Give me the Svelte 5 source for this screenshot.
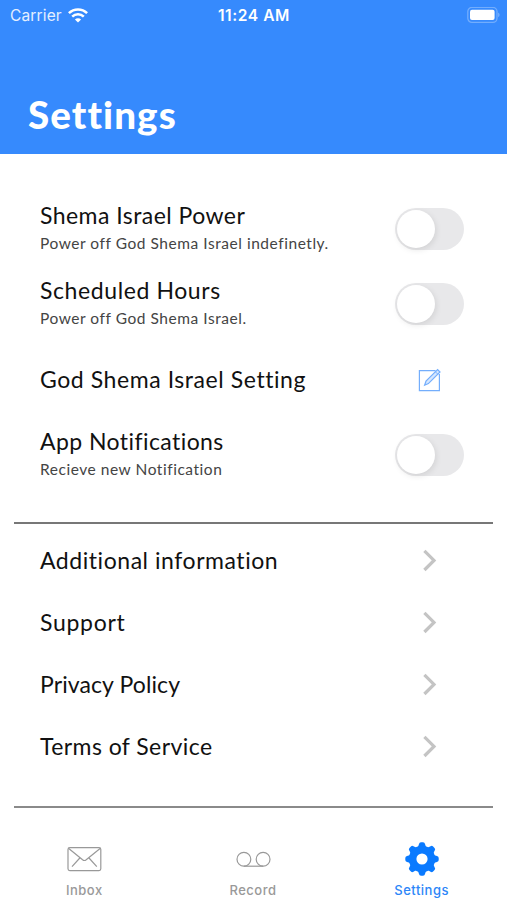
<script>
  // spacing is the letter spacing in px, tuned per label
  const settings = [
    {
      title: "Shema Israel Power",
      spacing: 0.45,
      sub: "Power off God Shema Israel indefinetly.",
      kind: "switch",
    },
    { title: "Scheduled Hours", spacing: 0.6, sub: "Power off God Shema Israel.", kind: "switch" },
    { title: "God Shema Israel Setting", spacing: 0.57, kind: "edit" },
    { title: "App Notifications", spacing: 0.43, sub: "Recieve new Notification", kind: "switch" },
  ];
  const links = [
    { title: "Additional information", spacing: 0.55 },
    { title: "Support", spacing: 0.7 },
    { title: "Privacy Policy", spacing: 0.1 },
    { title: "Terms of Service", spacing: 0.43 },
  ];
  const teeth = [0, 45, 90, 135, 180, 225, 270, 315];

  let on = $state([false, false, false, false]);
</script>

<div class="screen">
  <header>
    <div class="status">
      <div class="carrier">
        <span>Carrier</span>
        <svg width="20" height="15" viewBox="0 0 20 15" fill="none" stroke="#fff" stroke-width="2.5">
          <path d="M0.9 5.2a13 13 0 0 1 18.2 0" />
          <path d="M4.2 8.7a8.3 8.3 0 0 1 11.6 0" />
          <path d="M10 14.6 6.9 11.5a4.4 4.4 0 0 1 6.2 0z" fill="#fff" stroke="none" />
        </svg>
      </div>
      <span class="time">11:24 AM</span>
      <svg class="battery" width="33" height="17" viewBox="0 0 33 17">
        <rect x="0.8" y="0.4" width="29.2" height="15" rx="4.2" fill="none" stroke="#fff" stroke-opacity="0.3" stroke-width="1.3" />
        <rect x="3" y="2.7" width="24.6" height="10.4" rx="2" fill="#fff" />
        <path d="M31.3 5.6v4.6c1.6-.8 1.6-3.8 0-4.6z" fill="#fff" fill-opacity="0.4" />
      </svg>
    </div>
    <h1>Settings</h1>
  </header>

  <main>
    <section class="settings">
      {#each settings as item, i}
        <div class="row">
          <div class="text">
            <div class="title" style="letter-spacing: {item.spacing}px">{item.title}</div>
            {#if item.sub}
              <div class="sub">{item.sub}</div>
            {/if}
          </div>
          <div class="control">
            {#if item.kind === "switch"}
              <button class="switch" class:on={on[i]} aria-label={item.title} onclick={() => (on[i] = !on[i])}>
                <span class="knob"></span>
              </button>
            {:else}
              <svg width="24" height="24" viewBox="0 0 24 24" fill="none" stroke="#74aefc" stroke-width="1.2">
                <path d="M18.6 2.6H2.4v20h20V6" />
                <path d="M7.6 17.2l1.4-4L20.6 1.6l2.4 2.4L11.4 15.6z" fill="#d5e7ff" />
                <path d="M18.4 3.8l2.5 2.5" stroke-width="0.9" />
              </svg>
            {/if}
          </div>
        </div>
      {/each}
    </section>

    <section class="links">
      {#each links as link}
        <div class="row link">
          <div class="title" style="letter-spacing: {link.spacing}px">{link.title}</div>
          <div class="control">
            <svg width="16" height="24" viewBox="0 0 16 24" fill="none" stroke="#c4c4c4" stroke-width="3.2">
              <path d="M3.4 2.8 13 12.4 3.4 22" />
            </svg>
          </div>
        </div>
      {/each}
    </section>
  </main>

  <nav>
    <div class="tab">
      <svg width="36" height="36" viewBox="0 0 36 36" fill="none" stroke="#999" stroke-width="1.2">
        <rect x="2" y="6.6" width="32.8" height="23" rx="1.8" />
        <path d="M2.4 7.2l14.2 11.6q1.8 1.4 3.6 0L34.4 7.2M6 25.6l7.8-8.6M30.8 25.6l-7.8-8.6" />
      </svg>
      <span>Inbox</span>
    </div>
    <div class="tab">
      <svg width="36" height="36" viewBox="0 0 36 36" fill="none" stroke="#999" stroke-width="1.2">
        <circle cx="8.9" cy="18.3" r="6.9" />
        <circle cx="28.1" cy="18.3" r="6.9" />
        <path d="M8.9 25.2h19.2" />
      </svg>
      <span>Record</span>
    </div>
    <div class="tab active">
      <svg width="36" height="36" viewBox="0 0 36 36">
        {#each teeth as angle}
          <path d="M12.4 7.5Q14.6 5.8 15 3 15.3 1.3 17 1.3h2Q20.7 1.3 21 3 21.4 5.8 23.6 7.5L18 12z" fill="#0a7aff" transform="rotate({angle} 18 18)" />
        {/each}
        <circle cx="18" cy="18" r="9.4" fill="none" stroke="#0a7aff" stroke-width="7.6" />
      </svg>
      <span>Settings</span>
    </div>
  </nav>
</div>

<style>
  :global(body) {
    margin: 0;
    background: #fff;
  }
  .screen {
    width: 507px;
    height: 900px;
    display: flex;
    flex-direction: column;
    overflow: hidden;
    background: #fff;
    color: #111;
    font-family: Lato, "Open Sans", sans-serif;
  }
  header {
    height: 154px;
    flex: none;
    display: flex;
    flex-direction: column;
    justify-content: space-between;
    background: #368afd;
    color: #fff;
  }
  .status {
    height: 30px;
    box-sizing: border-box;
    padding: 0 7px 0 10px;
    display: grid;
    grid-template-columns: 1fr auto 1fr;
    align-items: center;
    font-family: Inter, sans-serif;
    font-size: 15.5px;
  }
  .carrier {
    display: flex;
    align-items: center;
    gap: 6px;
    color: #e4efff;
    letter-spacing: 0.15px;
  }
  .time {
    padding-right: 2px;
    font-weight: 600;
    letter-spacing: 0.6px;
  }
  .battery {
    justify-self: end;
  }
  h1 {
    margin: 0 0 17px 28px;
    font-size: 38.5px;
    line-height: 46px;
    font-weight: 900;
    letter-spacing: 1.1px;
  }
  main {
    flex: 1;
    display: flex;
    flex-direction: column;
    padding: 37px 14px 0;
  }
  .settings {
    height: 331px;
    border-bottom: 2px solid #777;
  }
  .links {
    height: 277px;
    padding-top: 5px;
    border-bottom: 2px solid #8a8a8a;
  }
  .row {
    height: 75.5px;
    padding: 0 29px 0 26px;
    display: flex;
    align-items: center;
    justify-content: space-between;
  }
  .link {
    height: 62px;
  }
  .title {
    font-size: 23px;
    line-height: 26px;
    padding-bottom: 1px;
    white-space: nowrap;
  }
  .text .title:not(:only-child) {
    line-height: 25px;
    padding-bottom: 3px;
  }
  .sub {
    font-size: 15.5px;
    line-height: 24px;
    color: #444;
    letter-spacing: 0.54px;
    white-space: nowrap;
  }
  .control {
    width: 70px;
    display: flex;
    justify-content: center;
  }
  .switch {
    width: 69px;
    height: 42px;
    padding: 2px;
    border: 0;
    border-radius: 21px;
    background: #e8e8ea;
    display: flex;
  }
  .switch.on {
    justify-content: flex-end;
    background: #34c759;
  }
  .knob {
    width: 38px;
    height: 38px;
    border-radius: 50%;
    background: #fff;
    box-shadow: 1px 2px 6px rgba(0, 0, 0, 0.1);
  }
  nav {
    height: 92px;
    flex: none;
    display: flex;
    padding-right: 1px;
  }
  .tab {
    flex: 1;
    padding-top: 33px;
    display: flex;
    flex-direction: column;
    align-items: center;
    gap: 5px;
    color: #999;
    font-family: Inter, sans-serif;
    font-size: 13px;
    line-height: 16px;
    font-weight: 500;
    letter-spacing: 0.5px;
  }
  .active {
    color: #2c86f8;
  }
</style>
